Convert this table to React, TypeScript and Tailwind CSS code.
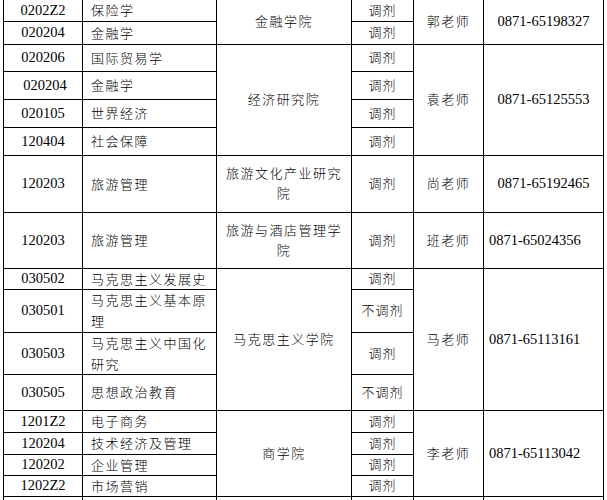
import React from "react";

const cjk = "font-['Liberation_Serif','Noto_Sans_CJK_SC',serif]";

interface CellProps {
    span?: string;
    className?: string;
    children?: React.ReactNode;
}

const Cell: React.FC<CellProps> = ({ span = "", className = "", children }) => {
    return (
        <div className={`${span} border-r border-b border-black flex items-center ${className}`}>
            {children}
        </div>
    );
};

const Code: React.FC<{ value: string; shift?: boolean }> = ({ value, shift }) => (
    <Cell className={`justify-center text-[14.5px] ${shift ? "pl-[4px]" : ""}`}>{value}</Cell>
);

const Major: React.FC<{ name: string }> = ({ name }) => (
    <Cell className="pl-[8px] pr-[2px] text-[13px] tracking-[1.5px] leading-[21px] font-light">{name}</Cell>
);

const Adjust: React.FC<{ value?: string }> = ({ value = "调剂" }) => (
    <Cell className="justify-center text-[13px] tracking-[1px] font-light">{value}</Cell>
);

const App: React.FC = () => {
    return (
        <div className={`bg-white min-h-[500px] text-black ${cjk}`}>
            <div className="ml-[3px] w-fit border-l border-black grid grid-cols-[79px_134px_135px_62px_70px_120px] grid-rows-[22px_23px_27px_28px_28px_28px_57px_56px_21px_43px_42px_36px_22px_22px_21px_21px_22px]">
                {/* 金融学院 */}
                <Code value="0202Z2" />
                <Major name="保险学" />
                <Cell span="row-span-2" className="justify-center text-center px-[6px] text-[13px] tracking-[1.5px] font-light">金融学院</Cell>
                <Adjust />
                <Cell span="row-span-2" className="justify-center text-[13px] tracking-[1.5px] font-light">郭老师</Cell>
                <Cell span="row-span-2" className="justify-center text-[14.5px]">0871-65198327</Cell>
                <Code value="020204" />
                <Major name="金融学" />
                <Adjust />

                {/* 经济研究院 */}
                <Code value="020206" />
                <Major name="国际贸易学" />
                <Cell span="row-span-4" className="justify-center text-center px-[6px] text-[13px] tracking-[1.5px] font-light">经济研究院</Cell>
                <Adjust />
                <Cell span="row-span-4" className="justify-center text-[13px] tracking-[1.5px] font-light">袁老师</Cell>
                <Cell span="row-span-4" className="justify-center text-[14.5px]">0871-65125553</Cell>
                <Code value="020204" shift />
                <Major name="金融学" />
                <Adjust />
                <Code value="020105" />
                <Major name="世界经济" />
                <Adjust />
                <Code value="120404" />
                <Major name="社会保障" />
                <Adjust />

                {/* 旅游文化产业研究院 */}
                <Code value="120203" />
                <Major name="旅游管理" />
                <Cell className="justify-center text-center px-[6px] text-[13px] tracking-[1.5px] leading-[20px] font-light">旅游文化产业研究院</Cell>
                <Adjust />
                <Cell className="justify-center text-[13px] tracking-[1.5px] font-light">尚老师</Cell>
                <Cell className="justify-center text-[14.5px]">0871-65192465</Cell>

                {/* 旅游与酒店管理学院 */}
                <Code value="120203" />
                <Major name="旅游管理" />
                <Cell className="justify-center text-center px-[6px] text-[13px] tracking-[1.5px] leading-[20px] font-light">旅游与酒店管理学院</Cell>
                <Adjust />
                <Cell className="justify-center text-[13px] tracking-[1.5px] font-light">班老师</Cell>
                <Cell className="pl-[5px] text-[14.5px]">0871-65024356</Cell>

                {/* 马克思主义学院 */}
                <Code value="030502" />
                <Major name="马克思主义发展史" />
                <Cell span="row-span-4" className="justify-center text-center px-[6px] text-[13px] tracking-[1.5px] font-light">马克思主义学院</Cell>
                <Adjust />
                <Cell span="row-span-4" className="justify-center text-[13px] tracking-[1.5px] font-light">马老师</Cell>
                <Cell span="row-span-4" className="pl-[5px] text-[14.5px]">0871-65113161</Cell>
                <Code value="030501" />
                <Major name="马克思主义基本原理" />
                <Adjust value="不调剂" />
                <Code value="030503" />
                <Major name="马克思主义中国化研究" />
                <Adjust />
                <Code value="030505" />
                <Major name="思想政治教育" />
                <Adjust value="不调剂" />

                {/* 商学院 */}
                <Code value="1201Z2" />
                <Major name="电子商务" />
                <Cell span="row-span-4" className="justify-center text-center px-[6px] text-[13px] tracking-[1.5px] font-light">商学院</Cell>
                <Adjust />
                <Cell span="row-span-4" className="justify-center text-[13px] tracking-[1.5px] font-light">李老师</Cell>
                <Cell span="row-span-4" className="pl-[5px] text-[14.5px]">0871-65113042</Cell>
                <Code value="120204" />
                <Major name="技术经济及管理" />
                <Adjust />
                <Code value="120202" />
                <Major name="企业管理" />
                <Adjust />
                <Code value="1202Z2" />
                <Major name="市场营销" />
                <Adjust />

                {/* next row, cut off */}
                <Cell />
                <Cell />
                <Cell />
                <Cell />
                <Cell />
                <Cell />
            </div>
        </div>
    );
};

export default App;
